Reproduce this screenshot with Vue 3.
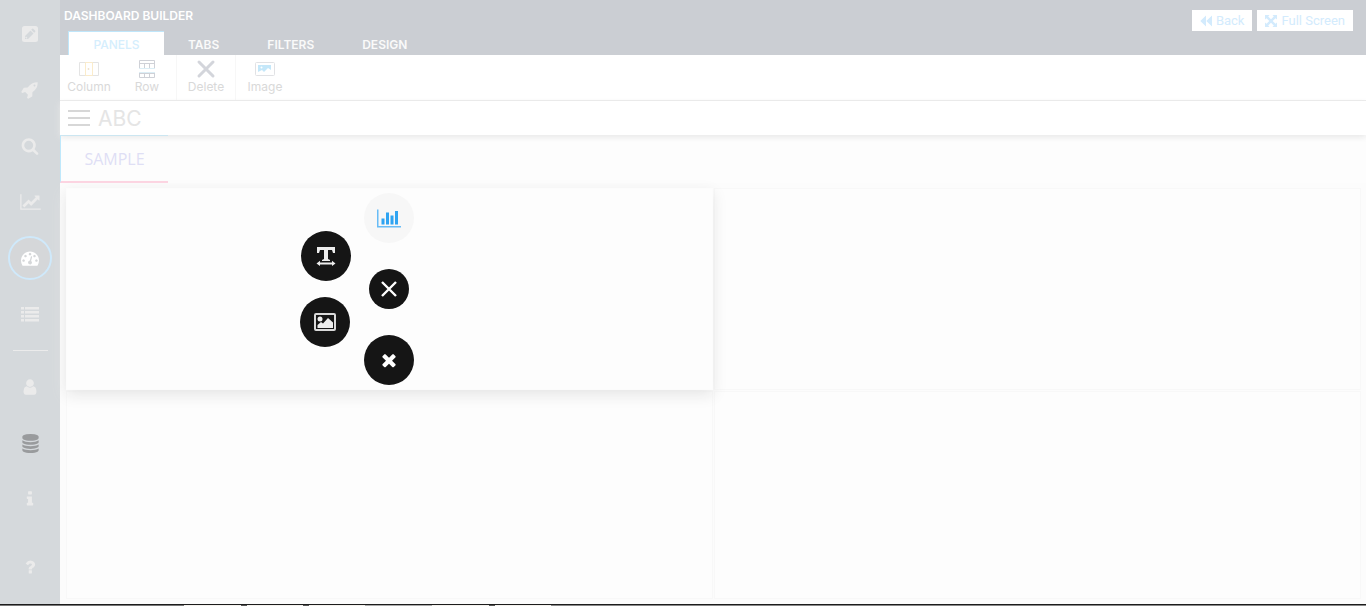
<script setup>
const navTop = [
  {
    name: 'Edit', size: 18, box: '0 0 18 18',
    d: 'M3.5 1h11A2.5 2.5 0 0 1 17 3.500v11a2.500 2.500 0 0 1-2.500 2.500h-11A2.500 2.500 0 0 1 1 14.500v-11A2.500 2.500 0 0 1 3.500 1zM4 14h3l5.500-5.500-3-3L4 11zM10.200 4.800l3 3 1-1q.5-.5 0-1l-2-2q-.5-.5-1 0zM5 11.500l1.500 1.500-.6.600H4.900v-.8H4.300v-.6z',
  },
  {
    name: 'Launch', size: 18, box: '0 0 1792 1792',
    d: 'M1440 448q0-40-28-68t-68-28-68 28-28 68 28 68 68 28 68-28 28-68zm224-288q0 249-75.5 430.5t-253.5 360.5q-81 80-195 176l-20 379q-2 16-16 26l-384 224q-7 4-16 4-12 0-23-9l-64-64q-13-14-8-32l85-276-281-281-276 85q-3 1-9 1-14 0-23-9l-64-64q-17-19-5-39l224-384q10-14 26-16l379-20q96-114 176-195 188-187 358-258t431-71q14 0 24 9.500t10 22.500z',
  },
  {
    name: 'Search', size: 18, box: '0 0 1792 1792',
    d: 'M1216 832q0-185-131.5-316.5t-316.5-131.5-316.5 131.500-131.500 316.500 131.500 316.500 316.500 131.500 316.500-131.500 131.500-316.500zm512 832q0 52-38 90t-90 38q-54 0-90-38l-343-342q-179 124-399 124-143 0-273.500-55.500t-225-150-150-225-55.500-273.500 55.500-273.500 150-225 225-150 273.500-55.500 273.500 55.500 225 150 150 225 55.500 273.500q0 220-124 399l343 343q37 37 37 90z',
  },
  {
    name: 'Charts', size: 21, box: '0 0 2048 1792',
    d: 'M2048 1536v128h-2048v-1536h128v1408h1920zm-128-1248v435q0 21-19.500 29.500t-35.500-7.500l-121-121-633 633q-10 10-23 10t-23-10l-233-233-416 416-192-192 585-585q10-10 23-10t23 10l233 233 464-464-121-121q-16-16-7.500-35.500t29.500-19.500h435q14 0 23 9t9 23z',
  },
  {
    name: 'Dashboards', size: 18, box: '0 0 1792 1792', active: true,
    d: 'M384 1152q0-53-37.500-90.500t-90.500-37.500-90.500 37.500-37.500 90.500 37.500 90.500 90.500 37.500 90.500-37.500 37.500-90.500zm192-448q0-53-37.500-90.500t-90.500-37.500-90.500 37.500-37.500 90.500 37.500 90.500 90.500 37.500 90.500-37.500 37.500-90.500zm428 481l101-382q6-26-7.500-48.500t-38.500-29.500-48 6.500-30 39.500l-101 382q-60 5-107 43.500t-63 98.500q-20 77 20 146t117 89 146-20 89-117q16-60-6-117t-72-91zm660-33q0-53-37.500-90.500t-90.500-37.500-90.500 37.500-37.500 90.500 37.500 90.500 90.500 37.500 90.500-37.500 37.500-90.500zm-640-640q0-53-37.500-90.500t-90.500-37.500-90.500 37.500-37.500 90.500 37.500 90.500 90.500 37.500 90.500-37.500 37.500-90.500zm448 192q0-53-37.500-90.500t-90.500-37.500-90.500 37.500-37.500 90.500 37.500 90.500 90.500 37.500 90.500-37.500 37.500-90.500zm320 448q0 261-141 483-19 29-54 29h-1402q-35 0-54-29-141-221-141-483 0-182 71-348t191-286 286-191 348-71 348 71 286 191 191 286 71 348z',
  },
  {
    name: 'Lists', size: 18, box: '0 0 18 18',
    d: 'M0 2h3v2.500H0zM4 2h14v2.500H4zM0 6h3v2.500H0zM4 6h14v2.500H4zM0 10h3v2.500H0zM4 10h14v2.500H4zM0 14h3v2.500H0zM4 14h14v2.500H4z',
  },
]
const navBottom = [
  {
    name: 'User', size: 18, box: '0 0 1792 1792',
    d: 'M1536 1399q0 109-62.500 187t-150.500 78h-854q-88 0-150.500-78t-62.500-187q0-85 8.500-160.500t31.500-152 58.500-131 94-89 134.500-34.500q131 128 313 128t313-128q76 0 134.500 34.500t94 89 58.500 131 31.500 152 8.500 160.500zm-256-887q0 159-112.500 271.500t-271.500 112.500-271.500-112.500-112.500-271.500 112.500-271.500 271.500-112.500 271.500 112.500 112.500 271.500z',
  },
  {
    name: 'Data', size: 19, box: '0 0 1792 1792', dark: true,
    d: 'M896 768q237 0 443-43t325-127v170q0 69-103 128t-280 93.500-385 34.500-385-34.500-280-93.500-103-128v-170q119 84 325 127t443 43zm0 768q237 0 443-43t325-127v170q0 69-103 128t-280 93.500-385 34.500-385-34.500-280-93.500-103-128v-170q119 84 325 127t443 43zm0-384q237 0 443-43t325-127v170q0 69-103 128t-280 93.500-385 34.500-385-34.500-280-93.500-103-128v-170q119 84 325 127t443 43zm0-1152q208 0 385 34.500t280 93.500 103 128v128q0 69-103 128t-280 93.500-385 34.500-385-34.500-280-93.500-103-128v-128q0-69 103-128t280-93.500 385-34.500z',
  },
  {
    name: 'Info', size: 18, box: '0 0 1792 1792',
    d: 'M1216 1344v128q0 26-19 45t-45 19h-512q-26 0-45-19t-19-45v-128q0-26 19-45t45-19h64v-384h-64q-26 0-45-19t-19-45v-128q0-26 19-45t45-19h384q26 0 45 19t19 45v576h64q26 0 45 19t19 45zm-128-1152v192q0 26-19 45t-45 19h-256q-26 0-45-19t-19-45v-192q0-26 19-45t45-19h256q26 0 45 19t19 45z',
  },
  {
    name: 'Help', size: 18, box: '0 0 1792 1792',
    d: 'M1088 1256v240q0 16-12 28t-28 12h-240q-16 0-28-12t-12-28v-240q0-16 12-28t28-12h240q16 0 28 12t12 28zm316-600q0 54-15.500 101t-35 76.500-55 59.500-57.500 43.500-61 35.500q-41 23-68.500 65t-27.500 67q0 17-12 32.500t-28 15.500h-240q-15 0-25.500-18.500t-10.500-37.500v-45q0-83 65-156.500t143-108.500q59-27 84-56t25-76q0-42-46.500-74t-107.500-32q-65 0-108 29-35 25-107 115-13 16-31 16-12 0-25-8l-164-125q-13-10-15.500-25t5.500-28q160-266 464-266 80 0 161 31t146 83 106 127.500 41 158.500z',
  },
]
const menuTabs = ['TABS', 'FILTERS', 'DESIGN']
</script>

<template>
  <div class="shell">
    <div class="workspace">
      <nav class="sidebar" aria-label="Main">
        <a v-for="item in navTop" :key="item.name" href="#" class="nav-item" :class="{ active: item.active }" :aria-label="item.name">
          <svg :width="item.size" height="18" :viewBox="item.box" fill-rule="evenodd"><path :d="item.d" /></svg>
        </a>
        <hr class="nav-rule" />
        <a v-for="item in navBottom" :key="item.name" href="#" class="nav-item" :class="{ dark: item.dark, help: item.name === 'Help' }" :aria-label="item.name">
          <svg :width="item.size" :height="item.size" :viewBox="item.box"><path :d="item.d" /></svg>
        </a>
      </nav>

      <main class="main">
        <header class="header">
          <div class="heading">
            <h1 class="title">DASHBOARD BUILDER</h1>
            <div class="menu-tabs">
              <button type="button" class="menu-tab current">PANELS</button>
              <button v-for="tab in menuTabs" :key="tab" type="button" class="menu-tab">{{ tab }}</button>
            </div>
          </div>
          <div class="header-actions">
            <button type="button" class="action">
              <svg width="12" height="12" viewBox="0 0 12 12"><path d="M6 0.500v11L0.300 6zM12 0.500v11L6.300 6z" /></svg>
              Back
            </button>
            <button type="button" class="action">
              <svg width="12" height="12" viewBox="0 0 12 12"><path d="M0 0h4.500L3.200 1.500 6 4.300l2.800-2.800L7.500 0H12v4.500l-1.500-1.300L7.700 6l2.800 2.800L12 7.500V12H7.500l1.300-1.500L6 7.700l-2.800 2.800L4.500 12H0V7.500l1.500 1.300L4.300 6 1.500 3.200 0 4.500z" /></svg>
              Full Screen
            </button>
          </div>
        </header>

        <div class="toolbar">
          <button type="button" class="tool">
            <svg width="20" height="20" viewBox="0 0 20 20" fill="none">
              <path d="M0.500 3.500h19v13H0.500z" stroke="#e4e4e4" /><path d="M6.500 3.500h7v13h-7z" stroke="#fbeccb" /><path d="M8.500 10h2M9.500 9v2" stroke="#efe3cf" />
            </svg>
            Column
          </button>
          <button type="button" class="tool">
            <svg width="20" height="20" viewBox="0 0 20 20" fill="none">
              <path d="M2.500 1.500h15v17h-15zM2 4.500h16M2 14.500h16M7.500 5v4M12.500 5v4M7.500 14.500v4M12.500 14.500v4" stroke="#cfd1d7" /><path d="M1 9h18v4H1z" fill="#fff" /><path d="M2 9.500h16M2 13.500h16" stroke="#dceef6" />
            </svg>
            Row
          </button>
          <button type="button" class="tool divided">
            <svg width="20" height="20" viewBox="0 0 20 20"><path d="M3 3l14 14M17 3L3 17" stroke="#d3d5db" stroke-width="3" stroke-linecap="round" /></svg>
            Delete
          </button>
          <button type="button" class="tool divided">
            <svg width="20" height="20" viewBox="0 0 20 20">
              <rect x="0.500" y="3.500" width="19" height="13" rx="1" fill="#fff" stroke="#e1e2e5" /><path d="M3 6h13v5l-3-2-4 4-2-2-4 2z" fill="#c4e7f9" /><circle cx="6.500" cy="8.500" r="1" fill="#fff" />
            </svg>
            Image
          </button>
        </div>

        <div class="name-bar">
          <button type="button" class="burger" aria-label="Menu"><i></i><i></i><i></i></button>
          <h2 class="name">ABC</h2>
        </div>

        <div class="sheet-tabs"><button type="button" class="sheet-tab">SAMPLE</button></div>

        <section class="grid">
          <div class="cell chosen">
            <button type="button" class="bubble chart" aria-label="Chart">
              <svg width="24" height="21" viewBox="0 0 2048 1792"><path d="M640 896v512h-256v-512h256zm384-512v1024h-256v-1024h256zm384 256v768h-256v-768h256zm384-384v1152h-256v-1152h256z" fill="#2fa4f2" /><path d="M2048 1536v128h-2048v-1536h128v1408z" fill="#68bcf6" /></svg>
            </button>
            <button type="button" class="bubble text" aria-label="Text">
              <svg width="20" height="20" viewBox="0 0 20 20"><path d="M1 1h18v6h-2l-1-3h-4v9l2 1v1H6v-1l2-1V4H4L3 7H1z" /><path d="M0.500 17.500l3.500-2.800v1.800h12v-1.800l3.500 2.800-3.500 2.500v-1.500H4v1.500z" /></svg>
            </button>
            <button type="button" class="bubble image" aria-label="Image">
              <svg width="22" height="20" viewBox="0 0 22 20"><rect x="1" y="2" width="20" height="16" rx="1" fill="none" stroke="#d9d9d9" stroke-width="2" /><circle cx="6" cy="7" r="2.500" /><path d="M3.500 16v-3L7 10l2 1.500 5-5.500 5 4.500V16z" /></svg>
            </button>
            <button type="button" class="bubble toggle" aria-label="Close menu">
              <svg width="18" height="18" viewBox="0 0 18 18"><path d="M2 2l14 14M16 2L2 16" stroke="#fff" stroke-width="2.400" /></svg>
            </button>
            <button type="button" class="bubble remove" aria-label="Remove">
              <svg width="20" height="20" viewBox="0 0 1792 1792"><path d="M1490 1322q0 40-28 68l-136 136q-28 28-68 28t-68-28l-294-294-294 294q-28 28-68 28t-68-28l-136-136q-28-28-28-68t28-68l294-294-294-294q-28-28-28-68t28-68l136-136q28-28 68-28t68 28l294 294 294-294q28-28 68-28t68 28l136 136q28 28 28 68t-28 68l-294 294 294 294q28 28 28 68z" /></svg>
            </button>
          </div>
          <div class="cell"></div>
          <div class="cell"></div>
          <div class="cell"></div>
        </section>
      </main>
    </div>
    <div class="edge"></div>
  </div>
</template>

<style scoped>
.shell {
  display: flex;
  flex-direction: column;
  min-height: 100vh;
  background: #fdfdfd;
  font-family: Inter, "Noto Sans", sans-serif;
}
.shell * { box-sizing: border-box; }
button {
  margin: 0;
  padding: 0;
  border: 0;
  background: none;
  font: inherit;
  cursor: pointer;
}
svg { display: block; flex: none; }
.workspace { display: flex; flex: 1; }
.sidebar {
  display: flex;
  flex-direction: column;
  align-items: center;
  flex: none;
  width: 60px;
  padding-top: 12px;
  background: #d5d9dc;
}
.nav-item {
  display: flex;
  align-items: center;
  justify-content: center;
  width: 44px;
  height: 44px;
  margin-bottom: 12px;
  border: 2px solid transparent;
  border-radius: 50%;
  fill: #ebebeb;
}
.nav-item.active { border-color: #cfe9fb; fill: #fff; background: #d5d7d9; }
.nav-item.dark { fill: #999b9d; }
.nav-item.help { margin: 12px 0 0; }
.nav-rule { width: 35px; height: 1px; margin: 2px 0 14px; border: 0; background: #ebebeb; }
.main { display: flex; flex: 1; flex-direction: column; min-width: 0; }
.header {
  display: flex;
  justify-content: space-between;
  height: 55px;
  background: #cbced3;
}
.heading { display: flex; flex-direction: column; justify-content: space-between; }
.title {
  margin: 0;
  padding: 8px 4px 0;
  color: #fff;
  font-size: 12px;
  font-weight: 600;
  line-height: 16px;
}
.menu-tabs { display: flex; padding-left: 8px; }
.menu-tab {
  height: 24px;
  padding: 3px 24px 0;
  color: #fafafa;
  font-size: 12px;
  font-weight: 600;
  line-height: 20px;
}
.menu-tab.current {
  width: 96px;
  border-top: 1px solid #bfe6fa;
  border-left: 1px solid #bfe6fa;
  background: #fff;
  color: #d5eefd;
  font-weight: 500;
}
.header-actions { display: flex; align-items: flex-start; gap: 5px; padding: 10px 13px 0 0; }
.action {
  display: flex;
  align-items: center;
  gap: 4px;
  height: 21px;
  padding: 0 8px;
  background: #fff;
  color: #d3ebfd;
  fill: #d3ebfd;
  font-family: Roboto, sans-serif;
  font-size: 13px;
}
.toolbar { display: flex; height: 46px; border-bottom: 1px solid #ebebeb; background: #fff; }
.tool {
  display: flex;
  flex-direction: column;
  align-items: center;
  gap: 1px;
  width: 58px;
  padding-top: 4px;
  color: #d9d9d9;
  font-size: 12px;
  line-height: 14px;
}
.tool.divided { width: 59px; border-left: 1px solid #f7f7f7; }
.name-bar {
  display: flex;
  align-items: center;
  gap: 8px;
  height: 34px;
  padding-left: 8px;
  background: #fff;
  box-shadow: 0 2px 6px #e7e7e7;
}
.burger { display: flex; flex-direction: column; gap: 5px; width: 22px; }
.burger i { height: 2px; background: #d7d7d7; }
.name { margin: 0; padding-top: 2px; color: #e5e5e5; font-size: 21px; font-weight: 400; line-height: 28px; }
.sheet-tabs { display: flex; height: 48px; }
.sheet-tab {
  width: 108px;
  border-top: 1px solid #cce6f1;
  border-left: 1px solid #bfe8fb;
  border-bottom: 2px solid #fdd3e1;
  color: #dfdff5;
  font-family: "Open Sans", sans-serif;
  font-size: 16px;
}
.grid {
  display: grid;
  flex: 1;
  grid-template-columns: 1fr 1fr;
  grid-template-rows: 202px 1fr;
  gap: 1px;
  padding: 5px 5px 5px 6px;
  background: #fcfcfc;
}
.cell { border: 1px solid #f8f8f8; background: #fdfdfd; }
.cell.chosen {
  position: relative;
  border-color: #fcfcfc;
  box-shadow: 0 5px 14px #e6e6e6;
}
.bubble {
  position: absolute;
  display: flex;
  align-items: center;
  justify-content: center;
  width: 50px;
  height: 50px;
  border-radius: 50%;
  background: #151515;
  fill: #ededed;
}
.bubble.chart { top: 4px; left: calc(50% - 26px); background: #f7f7f7; }
.bubble.text { top: 42px; left: calc(50% - 89px); }
.bubble.image { top: 108px; left: calc(50% - 90px); }
.bubble.toggle { top: 80px; left: calc(50% - 21px); width: 40px; height: 40px; }
.bubble.remove { top: 146px; left: calc(50% - 26px); fill: #fff; }
.edge {
  height: 2px;
  border-top: 1px solid #1c1c1c;
  background: linear-gradient(90deg, #777 0 184px, #f4f2ee 184px 241px, #555 241px 247px, #f4f2ee 247px 303px, #555 303px 309px, #f4f2ee 309px 365px, #aaa 365px 432px, #f4f2ee 432px 489px, #555 489px 495px, #f4f2ee 495px 551px, #888 551px);
}
</style>

<style>
body { margin: 0; }
</style>
